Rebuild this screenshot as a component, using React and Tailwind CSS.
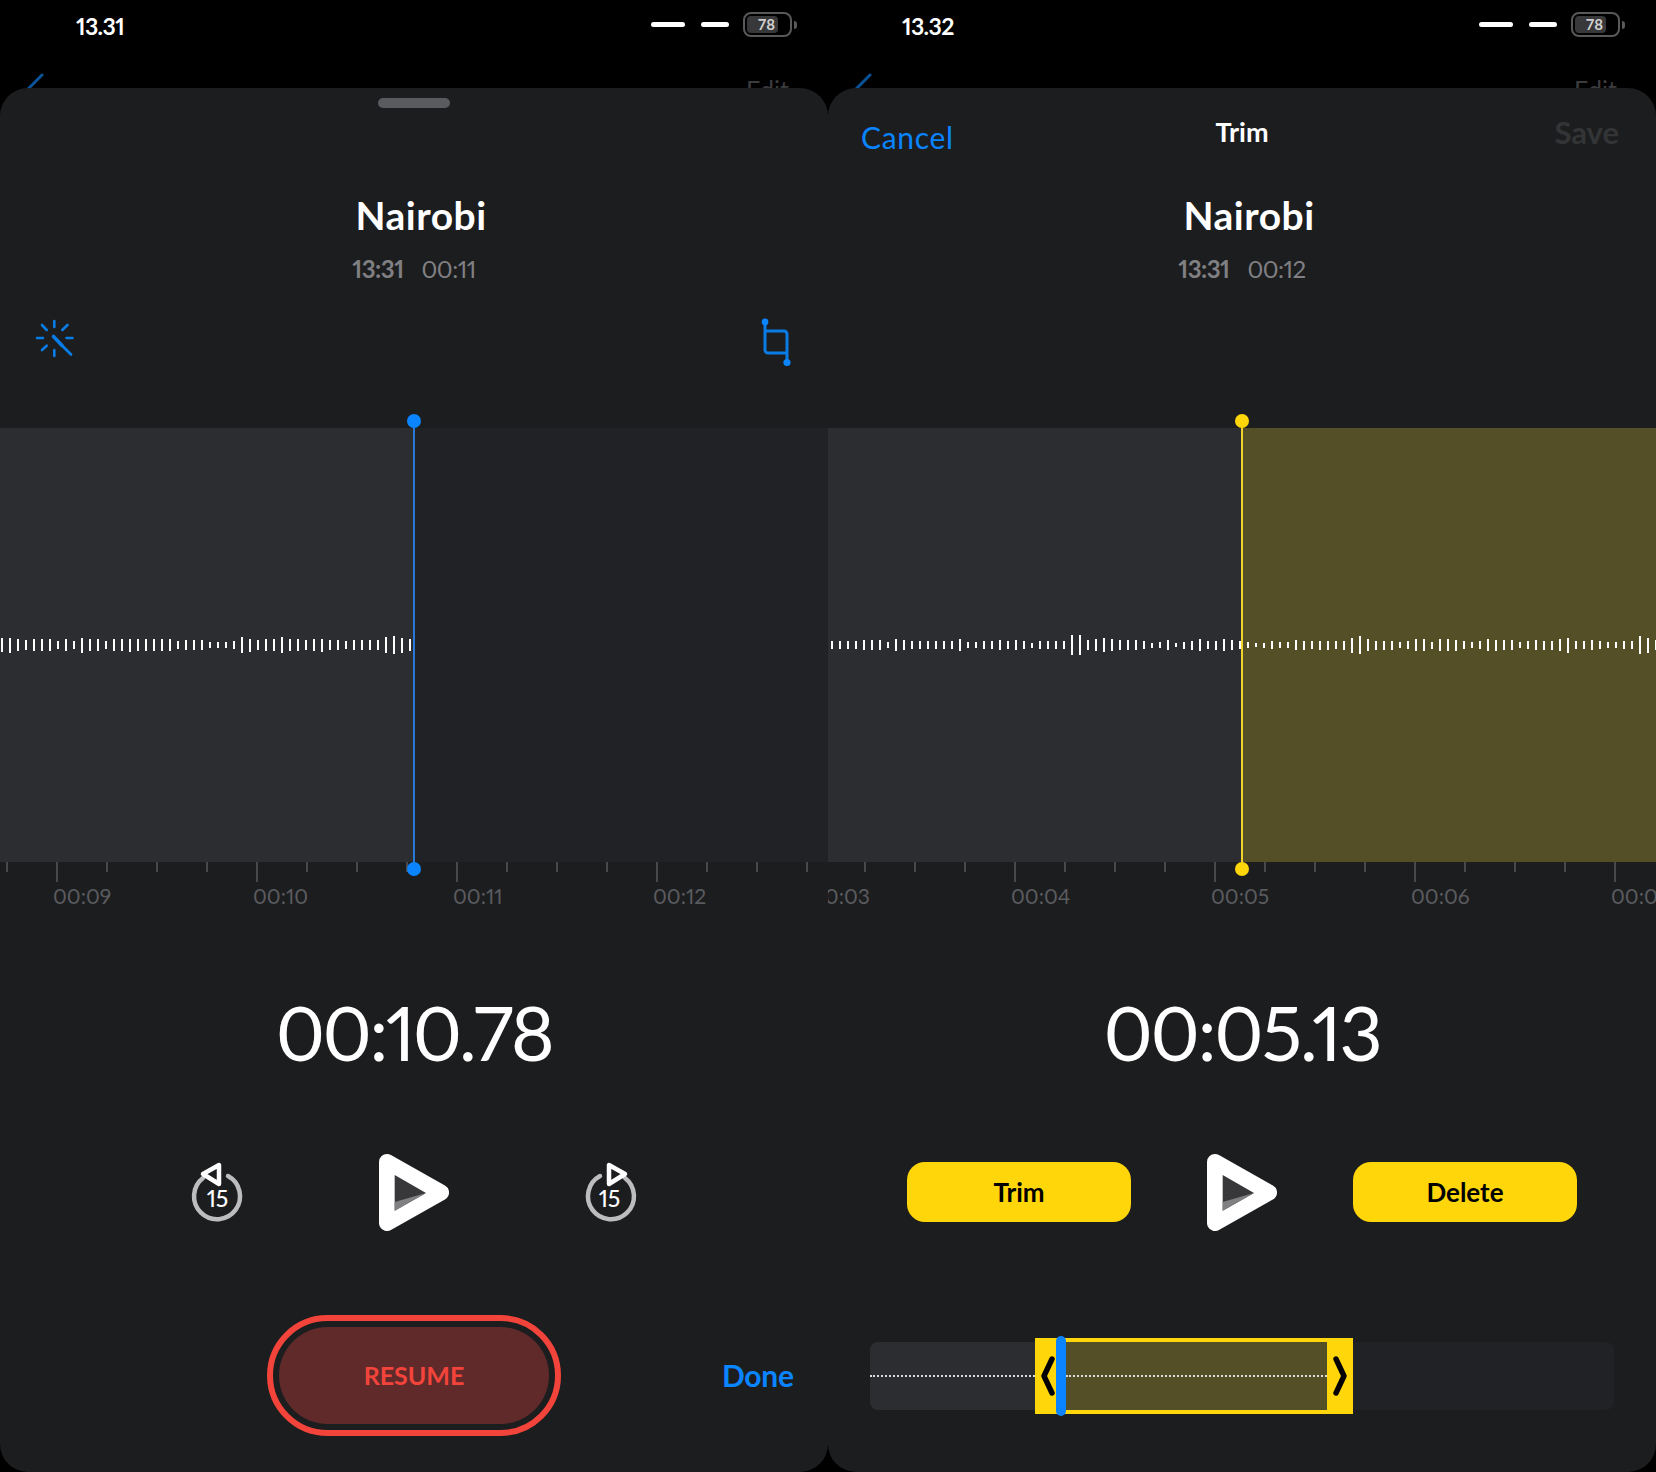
import React from 'react';

const leftBars = [14,15,12,10,12,12,12,8,12,8,15,12,12,8,12,12,13,12,12,12,12,12,8,10,10,10,6,6,6,8,16,13,10,12,12,16,12,12,10,12,13,10,10,8,10,10,10,10,16,18,15,12];
const rightBars = [8,8,8,8,10,10,10,6,12,10,8,8,8,8,8,8,12,6,6,8,8,10,8,10,8,5,8,8,8,8,20,20,10,12,14,12,10,10,10,8,5,6,10,4,7,9,12,8,9,12,10,8,6,4,5,8,6,6,10,9,8,9,9,8,9,15,18,12,9,9,9,6,8,12,12,7,12,12,11,8,6,8,12,11,10,10,6,8,10,9,9,12,15,8,8,10,8,6,6,8,8,18,15,10];

const font = "font-['Lato','Noto_Sans',sans-serif]";

const Waveform = ({ bars, className }) => (
  <div className={`absolute inset-0 flex items-center gap-[6px] overflow-hidden ${className}`}>
    {bars.map((h, i) => (
      <div key={i} className="w-[2px] shrink-0 bg-white" style={{ height: h }} />
    ))}
  </div>
);

const Ruler = ({ offset, labelOffset, labels }) => (
  <div className="h-[60px] overflow-hidden">
    <div className={`flex h-[20px] ${offset}`}>
      {Array.from({ length: 20 }).map((_, i) => (
        <div key={i} className="w-[50px] shrink-0">
          <div className={i % 4 === 0 ? 'h-[20px] w-[2px] bg-[#48494c]' : 'h-[10px] w-[2px] bg-[#48494c]'} />
        </div>
      ))}
    </div>
    <div className={`mt-[1px] flex ${labelOffset}`}>
      {labels.map((l) => (
        <div key={l} className="w-[200px] shrink-0 text-[21px] leading-[26px] text-[#5a5b5e]">{l}</div>
      ))}
    </div>
  </div>
);

const Playhead = ({ line, dot }) => (
  <>
    <div className={`absolute left-[413px] top-[-7px] h-[448px] w-[2px] ${line}`} />
    <div className={`absolute left-[407px] top-[-14px] h-[14px] w-[14px] rounded-full ${dot}`} />
    <div className={`absolute left-[407px] top-[434px] h-[14px] w-[14px] rounded-full ${dot}`} />
  </>
);

const StatusBar = ({ time, timeClass }) => (
  <div className={`flex h-[88px] items-start justify-between pr-[31px] pt-[11px] ${timeClass}`}>
    <div className="text-[23px] font-bold leading-[30px] tracking-[-0.6px] text-white">{time}</div>
    <div className="mt-[1px] flex h-[25px] items-center">
      <div className="h-[5px] w-[34px] rounded-full bg-white" />
      <div className="ml-[16px] h-[5px] w-[28px] rounded-full bg-white" />
      <div className="ml-[14px] flex h-[25px] w-[49px] items-center rounded-[8px] border-2 border-[#59595b] p-[2px]">
        <div className="flex h-full w-[31px] items-center justify-end rounded-[4px] bg-[#38383a] pr-[3px] text-[15px] font-bold leading-none text-[#d0d0d0]">78</div>
      </div>
      <div className="ml-[2px] h-[8px] w-[3px] rounded-r-full bg-[#59595b]" />
    </div>
  </div>
);

// stuff of the screen below the sheet, only the top pokes out
const BehindSheet = () => (
  <>
    <svg className="absolute left-[24px] top-[72px]" width="22" height="18" fill="none">
      <path d="M3 18 L18 3" stroke="#0c5396" strokeWidth="3" strokeLinecap="round" />
    </svg>
    <div className="absolute left-[746px] top-[74px] text-[25px] leading-[30px] text-[#3c3c3e]">Edit</div>
  </>
);

const Title = ({ time, length }) => (
  <>
    <div className="h-[54px] pl-[14px] text-center text-[39px] font-bold leading-[54px] tracking-[0.5px] text-white">Nairobi</div>
    <div className="mt-[3px] flex h-[48px] items-center justify-center gap-[18px] text-[24px] leading-none tracking-[-0.5px] text-[#808083]">
      <span className="font-bold">{time}</span>
      <span>{length}</span>
    </div>
  </>
);

const PlayIcon = () => (
  <svg width="70" height="77" viewBox="0 0 70 77">
    <polygon points="8,8 62,38.5 8,69" fill="#fff" stroke="#fff" strokeWidth="16" strokeLinejoin="round" />
    <polygon points="15.7,21 47,39 15.7,56.7" fill="#38383b" />
    <polygon points="15.7,48 47,39 15.7,56.7" fill="#808083" />
  </svg>
);

const Skip = ({ flip }) => (
  <svg width="56" height="62" viewBox="0 0 56 62" fill="none">
    <g transform={flip ? 'translate(56 0) scale(-1 1)' : undefined}>
      <path d="M13 17 A23 23 0 1 0 38 15" stroke="#bdbdbf" strokeWidth="4.5" strokeLinecap="round" />
      <polygon points="13,13 29,4 29,23" fill="#1c1d1f" stroke="#fff" strokeWidth="4.5" strokeLinejoin="round" />
    </g>
    <text x="27.5" y="46" textAnchor="middle" fontSize="23" fontWeight="500" fill="#fff" fontFamily="Lato">15</text>
  </svg>
);

const WandIcon = () => (
  <svg width="40" height="40" viewBox="0 0 40 40" fill="none" stroke="#0a7ce6" strokeWidth="2.6" strokeLinecap="round">
    <path d="M20.3 3V9M20.3 32V38M3 20H9M32.5 20H38.5M28.3 12L33.5 7M8 7L12.7 12M8 32L12.7 27.7" />
    <path d="M19.5 18.5L28 27.5" strokeWidth="3.6" />
    <path d="M28 27.5L37 36.5" strokeWidth="2.8" />
  </svg>
);

const CropIcon = () => (
  <svg width="36" height="54" viewBox="0 0 36 54" fill="none" stroke="#0a7ce6" strokeWidth="3">
    <path d="M7 7V35a3 3 0 0 0 3 3H29M7 16H26a3 3 0 0 1 3 3V47" />
    <circle cx="7" cy="7" r="3.4" fill="#0a84ff" stroke="none" />
    <circle cx="29" cy="47.5" r="3.6" fill="#0a84ff" stroke="none" />
  </svg>
);

const Chevron = ({ d }) => (
  <svg width="14" height="40" viewBox="0 0 14 40" fill="none">
    <path d={d} stroke="#000" strokeWidth="5.4" strokeLinecap="round" strokeLinejoin="round" />
  </svg>
);

const LeftPhone = () => (
  <div className="relative flex h-[1472px] w-[828px] flex-col">
    <BehindSheet />
    <StatusBar time="13.31" timeClass="pl-[76px]" />
    <div className="relative z-10 flex-1 rounded-[28px] bg-[#1c1d1f]">
      <div className="h-[100px] pt-[10px]">
        <div className="mx-auto h-[10px] w-[72px] rounded-full bg-[#5a5b5f]" />
      </div>
      <Title time="13:31" length="00:11" />
      <div className="flex h-[135px] items-start justify-between px-[34px] pt-[25px]">
        <WandIcon />
        <div className="-mt-[3px]"><CropIcon /></div>
      </div>
      <div className="relative flex h-[434px]">
        <div className="w-[414px] bg-[#2c2d31]" />
        <div className="flex-1 bg-[#212226]" />
        <Waveform bars={leftBars} className="w-[412px] pl-[1px]" />
        <Playhead line="bg-[#2a78d6]" dot="bg-[#0a84ff]" />
      </div>
      <Ruler offset="-ml-[144px]" labelOffset="ml-[53px]" labels={['00:09', '00:10', '00:11', '00:12']} />
      <div className="flex h-[220px] items-center justify-center text-[75px] leading-none tracking-[-2.5px] text-white">00:10.78</div>
      <div className="flex h-[100px] items-center justify-center gap-[133px]">
        <Skip />
        <PlayIcon />
        <Skip flip />
      </div>
      <div className="relative flex justify-center pt-[73px]">
        <div className="flex h-[121px] w-[294px] items-center justify-center rounded-full border-[6px] border-[#f2443a] p-[6px]">
          <div className="flex h-full w-full items-center justify-center rounded-full bg-[#612a2a] pt-[1px] text-[25px] font-bold text-[#f2443a]">RESUME</div>
        </div>
        <div className="absolute left-[722px] top-[113px] text-[30px] font-bold leading-[40px] tracking-[-0.3px] text-[#0a84ff]">Done</div>
      </div>
    </div>
  </div>
);

const RightPhone = () => (
  <div className="relative flex h-[1472px] w-[828px] flex-col">
    <BehindSheet />
    <StatusBar time="13.32" timeClass="pl-[74px]" />
    <div className="relative z-10 flex-1 rounded-[28px] bg-[#1c1d1f]">
      <div className="grid h-[100px] grid-cols-3 items-start px-[33px] pt-[24px] leading-[40px]">
        <div className="mt-[5px] text-[30px] tracking-[0.7px] text-[#0a84ff]">Cancel</div>
        <div className="text-center text-[27px] font-bold text-white">Trim</div>
        <div className="pr-[4px] text-right text-[31px] font-bold text-[#333436]">Save</div>
      </div>
      <Title time="13:31" length="00:12" />
      <div className="h-[135px]" />
      <div className="relative flex h-[434px]">
        <div className="w-[414px] bg-[#2c2d31]" />
        <div className="flex-1 bg-[#554f28]" />
        <Waveform bars={rightBars} className="pl-[3px]" />
        <Playhead line="bg-[#f2d22e]" dot="bg-[#ffd60a]" />
      </div>
      <Ruler offset="-ml-[14px]" labelOffset="-ml-[17px]" labels={['00:03', '00:04', '00:05', '00:06', '00:07']} />
      <div className="flex h-[220px] items-center justify-center text-[75px] leading-none tracking-[-2.2px] text-white">00:05.13</div>
      <div className="flex h-[100px] items-center justify-center gap-[76px]">
        <button className="h-[60px] w-[224px] rounded-[18px] bg-[#ffd60a] text-[26px] font-bold text-black">Trim</button>
        <PlayIcon />
        <button className="h-[60px] w-[224px] rounded-[18px] bg-[#ffd60a] text-[26px] font-bold text-black">Delete</button>
      </div>
      <div className="flex items-center px-[42px] pt-[96px]">
        <div className="flex h-[68px] w-[165px] items-center rounded-l-[8px] bg-[#2c2d31]">
          <div className="w-full border-t-2 border-dotted border-[#dddddd]" />
        </div>
        <div className="relative flex h-[76px] w-[318px] border-y-4 border-[#ffd60a]">
          <div className="flex w-[31px] items-center bg-[#ffd60a] pl-[6px]">
            <Chevron d="M11 3L3 20L11 37" />
          </div>
          <div className="flex flex-1 items-center bg-[#554f28]">
            <div className="w-full border-t-2 border-dotted border-[#dddddd]" />
          </div>
          <div className="flex w-[26px] items-center bg-[#ffd60a] pl-[6px]">
            <Chevron d="M3 3L11 20L3 37" />
          </div>
          <div className="absolute left-[21px] top-[-6px] h-[80px] w-[10px] rounded-full bg-[#0a84ff]" />
        </div>
        <div className="h-[68px] flex-1 rounded-r-[8px] bg-[#212226]" />
      </div>
    </div>
  </div>
);

export default function App() {
  return (
    <div className={`flex h-[1472px] w-[1656px] bg-black proportional-nums ${font}`}>
      <LeftPhone />
      <RightPhone />
    </div>
  );
}
